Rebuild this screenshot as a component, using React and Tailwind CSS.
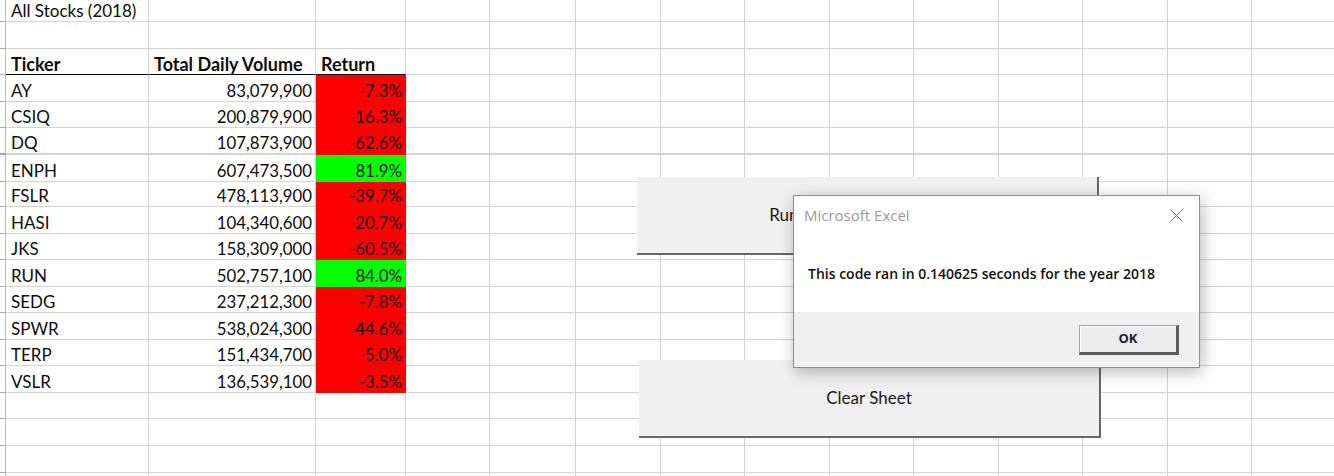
import React from 'react';

const COLS = ['w-[5px]', 'w-[143px]', 'w-[167px]', 'w-[90px]', 'w-[84px]', 'w-[86px]', 'w-[85px]', 'w-[84px]', 'w-[85px]', 'w-[84px]', 'w-[85px]', 'w-[84px]', 'w-[85px]', 'w-[84px]', 'w-[83px]'];
const ROWS = ['h-[22px]', 'h-[27px]', 'h-[26px]', 'h-[27px]', 'h-[26px]', 'h-[27px]', 'h-[27px]', 'h-[25px]', 'h-[27px]', 'h-[26px]', 'h-[27px]', 'h-[26px]', 'h-[27px]', 'h-[26px]', 'h-[27px]', 'h-[26px]', 'h-[27px]', 'h-[27px]', 'h-[10px]'];

const stocks = [
    ['AY', '83,079,900', '-7.3%', false],
    ['CSIQ', '200,879,900', '-16.3%', false],
    ['DQ', '107,873,900', '-62.6%', false],
    ['ENPH', '607,473,500', '81.9%', true],
    ['FSLR', '478,113,900', '-39.7%', false],
    ['HASI', '104,340,600', '-20.7%', false],
    ['JKS', '158,309,000', '-60.5%', false],
    ['RUN', '502,757,100', '84.0%', true],
    ['SEDG', '237,212,300', '-7.8%', false],
    ['SPWR', '538,024,300', '-44.6%', false],
    ['TERP', '151,434,700', '-5.0%', false],
    ['VSLR', '136,539,100', '-3.5%', false],
];

// what goes in a cell: text, alignment, bold, fill
const cellFor = (r, c) => {
    if (r === 0 && c === 1) return { text: 'All Stocks (2018)' };
    if (r === 2 && c === 1) return { text: 'Ticker', bold: true, header: true };
    if (r === 2 && c === 2) return { text: 'Total Daily Volume', bold: true, header: true };
    if (r === 2 && c === 3) return { text: 'Return', bold: true, header: true };
    const s = stocks[r - 3];
    if (s) {
        if (c === 1) return { text: s[0] };
        if (c === 2) return { text: s[1], right: true };
        if (c === 3) return { text: s[2], right: true, fill: s[3] ? 'green' : 'red' };
    }
    return {};
};

const Cell = ({ r, c }) => {
    const info = cellFor(r, c);
    const thick = r === 5;
    let cls = `${COLS[c]} shrink-0 h-full flex items-end whitespace-nowrap border-r border-[#d4d4d4] ${thick ? 'border-b-2' : 'border-b'}`;
    if (c === 0) cls += ' border-r-[#bcbcbc] border-b-[#a9a9a9]';
    if (info.header) cls += ' border-b-black';
    if (info.fill === 'red') cls += ' bg-[#ff0000] border-r-[#ff0000] border-b-[#ff0000]';
    if (info.fill === 'green') cls += ' bg-[#00ff00] border-r-[#00ff00] border-b-[#00ff00]';
    cls += info.right ? ' justify-end pr-[3px]' : ' pl-[5px]';
    let size = 'text-[17px]';
    if (info.bold) size = 'text-[18px] font-bold';
    if (info.right) size = 'text-[16.8px]';
    return (
        <div className={cls}>
            {info.text && (
                <span className={`leading-[20px] text-[#0d0d0d] ${size}`}>{info.text}</span>
            )}
        </div>
    );
};

const SheetButton = ({ label, className }) => (
    <div className={`absolute w-[462px] h-[78px] bg-[#f0f0f0] border-r-2 border-b-2 border-[#676767] flex items-center justify-center text-[17px] text-[#1a1a1a] ${className}`}>
        {label}
    </div>
);

const App = () => {
    return (
        <div className="relative w-[1334px] h-[476px] overflow-hidden bg-white font-['Lato',sans-serif]">
            {/* sheet grid */}
            <div className="flex flex-col">
                {ROWS.map((h, r) => (
                    <div key={r} className={`flex ${h} shrink-0`}>
                        {COLS.map((_, c) => <Cell key={c} r={r} c={c} />)}
                    </div>
                ))}
            </div>

            {/* form buttons */}
            <SheetButton label="Run Analysis for All Stocks" className="left-[637px] top-[177px]" />
            <SheetButton label="Clear Sheet" className="left-[639px] top-[360px]" />

            {/* message box */}
            <div className="absolute left-[793px] top-[195px] w-[407px] h-[173px] bg-white border border-[#8e8e8e] shadow-[2px_4px_16px_rgba(0,0,0,0.28)] flex flex-col font-['Open_Sans',sans-serif]">
                <div className="h-[38px] flex items-center justify-between pl-[10px] pr-[16px]">
                    <span className="text-[15px] text-[#9a9a9a]">Microsoft Excel</span>
                    <svg width="13" height="13" viewBox="0 0 13 13" className="text-[#6f6f6f]">
                        <path d="M0.5 0.5 L12.5 12.5 M12.5 0.5 L0.5 12.5" stroke="currentColor" strokeWidth="1" />
                    </svg>
                </div>
                <div className="h-[78px] flex items-center pl-[14px]">
                    <span className="text-[14px] font-semibold text-[#111]">This code ran in 0.140625 seconds for the year 2018</span>
                </div>
                <div className="flex-1 bg-[#f0f0f0] flex justify-end items-start pt-[13px] pr-[20px]">
                    <div className="w-[100px] h-[30px] bg-[#ededed] border-t border-l border-[#a3a3a3] border-r-[3px] border-b-[3px] border-r-[#5c5c5c] border-b-[#5c5c5c] shadow-[inset_1px_1px_0_#ffffff] flex items-center justify-center text-[13px] font-bold text-[#1b1b3a]">
                        OK
                    </div>
                </div>
            </div>
        </div>
    );
};

export default App;
